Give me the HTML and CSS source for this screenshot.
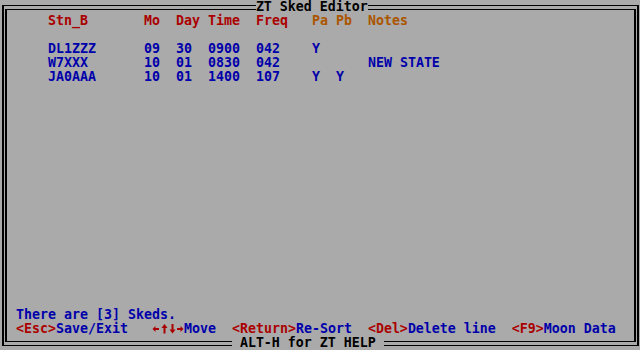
FILE: index.html
```html
<!DOCTYPE html>
<html lang="en">
<head>
  <meta charset="UTF-8" />
  <title>ZT Sked Editor</title>
  <link rel="stylesheet" href="styles.css">
</head>
<body>

  <div class="screen">
    <!-- double line frame, drawn under the text -->
    <div class="frame"></div>

<pre class="text">                                <span class="title">ZT Sked Editor</span>
      <span class="red">Stn_B</span>       <span class="red">Mo</span>  <span class="red">Day</span> <span class="red">Time</span>  <span class="red">Freq</span>   <span class="brown">Pa</span> <span class="brown">Pb</span>  <span class="brown">Notes</span>

      <span class="blue">DL1ZZZ</span>      <span class="blue">09</span>  <span class="blue">30</span>  <span class="blue">0900</span>  <span class="blue">042</span>    <span class="blue">Y</span>
      <span class="blue">W7XXX</span>       <span class="blue">10</span>  <span class="blue">01</span>  <span class="blue">0830</span>  <span class="blue">042</span>           <span class="blue">NEW STATE</span>
      <span class="blue">JA0AAA</span>      <span class="blue">10</span>  <span class="blue">01</span>  <span class="blue">1400</span>  <span class="blue">107</span>    <span class="blue">Y</span>  <span class="blue">Y</span>
















  <span class="blue">There are [3] Skeds.</span>
  <span class="red">&lt;Esc&gt;</span><span class="blue">Save/Exit</span>   <svg class="arrow" viewBox="0 0 8 14" aria-label="left"><polygon points="0.5,7 3.5,4 3.5,10"/><rect x="3" y="6" width="4" height="2"/></svg><svg class="arrow" viewBox="0 0 8 14" aria-label="up"><polygon points="4.5,2 7.5,6 1.5,6"/><rect x="3.5" y="5.5" width="2" height="6"/></svg><svg class="arrow" viewBox="0 0 8 14" aria-label="down"><polygon points="4.5,11.5 7.5,7.5 1.5,7.5"/><rect x="3.5" y="2" width="2" height="6"/></svg><svg class="arrow" viewBox="0 0 8 14" aria-label="right"><polygon points="7.5,7 4.5,4 4.5,10"/><rect x="1" y="6" width="4" height="2"/></svg><span class="blue">Move</span>  <span class="red">&lt;Return&gt;</span><span class="blue">Re-Sort</span>  <span class="red">&lt;Del&gt;</span><span class="blue">Delete line</span>  <span class="red">&lt;F9&gt;</span><span class="blue">Moon Data</span>
                             <span class="help"> ALT-H for ZT HELP </span></pre>
  </div>

</body>
</html>
```

FILE: styles.css
```css
body {
  margin: 0;
  background: #aaaaaa;
}

.screen {
  position: relative;
  width: 640px;
  height: 350px;
  overflow: hidden;
  background: #aaaaaa;
}

.frame {
  position: absolute;
  left: 2px;
  top: 5px;
  right: 1px;
  bottom: 4px;
  border-style: solid;
  border-color: #000;
  border-width: 1px 2px;
}

.frame::before {
  content: "";
  position: absolute;
  left: 1px;
  top: 3px;
  right: 1px;
  bottom: 3px;
  border-style: solid;
  border-color: #000;
  border-width: 1px 2px;
}

.text {
  position: relative;
  margin: 0;
  font-family: "DejaVu Sans Mono", "Liberation Mono", monospace;
  font-size: 13.29px;
  font-weight: bold;
  line-height: 14px;
  color: #000;
  white-space: pre;
}

.title, .help {
  background: #aaaaaa;
  color: #000;
}

.red {
  color: #aa0000;
}

.blue {
  color: #0000aa;
}

.brown {
  color: #aa5500;
}

.arrow {
  width: 8px;
  height: 14px;
  vertical-align: top;
  fill: #aa0000;
}
```
